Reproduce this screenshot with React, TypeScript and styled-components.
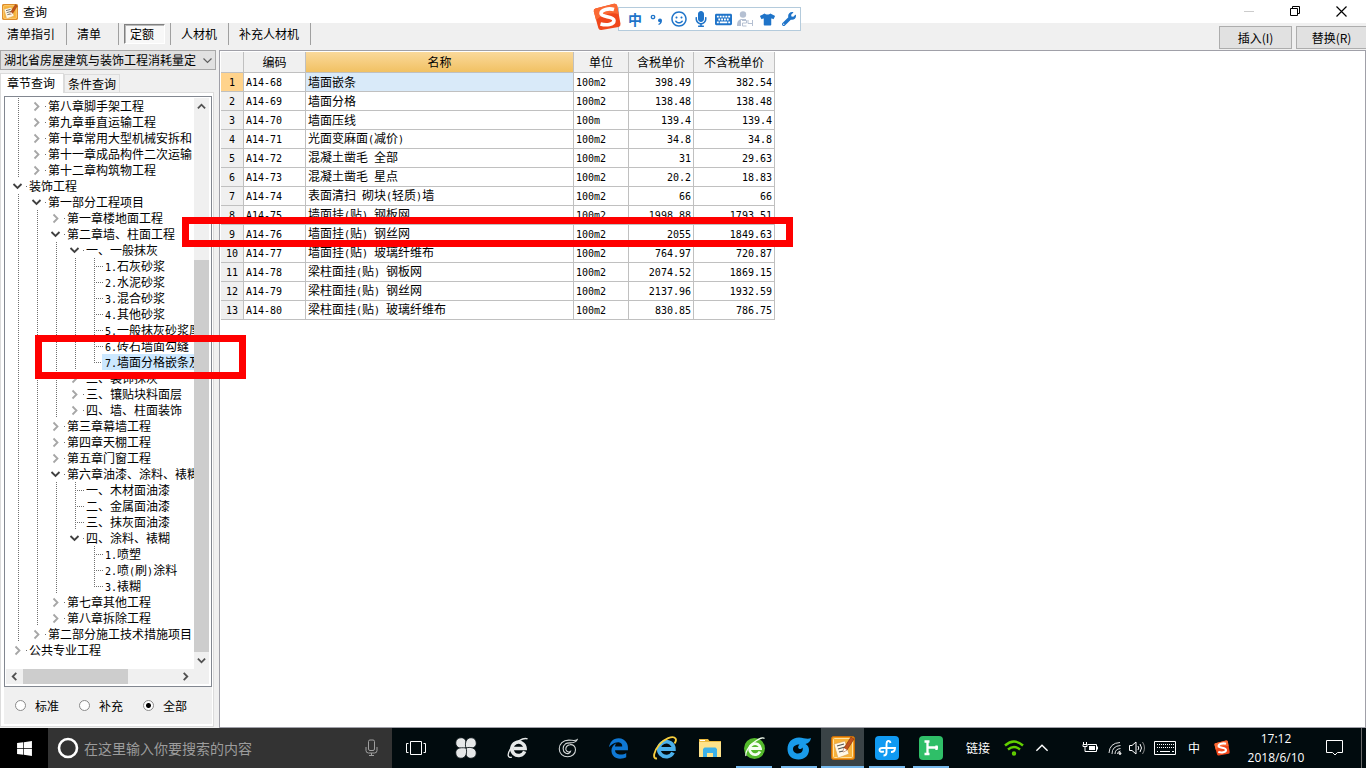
import React from "react";
import styled, { createGlobalStyle, css } from "styled-components";
import {
  FaKeyboard,
  FaMicrophone,
  FaRegSmile,
  FaTshirt,
  FaWindows,
  FaWrench,
} from "react-icons/fa";
import { FaEdgeLegacy } from "react-icons/fa6";

const GlobalStyle = createGlobalStyle`
  *, *::before, *::after { box-sizing: border-box; }
  body { margin: 0; background: #f0f0f0; }
  button, input, select, table { font: inherit; color: inherit; }
  button { border: 0; padding: 0; background: none; }
`;

const uiFont = `"Noto Sans CJK SC", sans-serif`;
const halfWidthFont = `"DejaVu Sans Mono", monospace`;

/* ---------- text ---------- */

const Half = styled.span`
  font-family: ${halfWidthFont};
  font-size: 10px;
  white-space: pre;
`;

/* Latin letters and digits take half of the width of a Chinese character. */
function Mixed({ text }: { text: string }) {
  const runs = text.match(/[\x20-\x7e]+|[^\x20-\x7e]+/g) ?? [];
  return (
    <>
      {runs.map((run, i) =>
        /^[\x20-\x7e]/.test(run) ? <Half key={i}>{run}</Half> : <React.Fragment key={i}>{run}</React.Fragment>
      )}
    </>
  );
}

/* ---------- window frame ---------- */

const Screen = styled.div`
  position: relative;
  display: flex;
  flex-direction: column;
  min-height: 100vh;
  overflow: hidden;
  background: #f0f0f0;
  color: #000;
  font-family: ${uiFont};
  font-size: 12px;
  line-height: 16px;
`;

const TitleBar = styled.header`
  display: flex;
  align-items: center;
  height: 23px;
  padding: 0 2px;
  background: #fff;
`;

const WindowTitle = styled.h1`
  flex: 1;
  margin: 0 0 0 5px;
  font-size: 12px;
  font-weight: 400;
`;

const WindowControl = styled.button<{ $faded?: boolean }>`
  display: grid;
  place-items: center;
  width: 46px;
  height: 20px;
  color: ${(p) => (p.$faded ? "#cccccc" : "#000")};
`;

const ToolBar = styled.div`
  display: flex;
  justify-content: space-between;
  height: 27px;
`;

const ToolNav = styled.nav`
  display: flex;
  height: 22px;
`;

const ToolButton = styled.button<{ $width: number; $inset?: number }>`
  width: ${(p) => p.$width}px;
  padding-left: ${(p) => p.$inset ?? 10}px;
  border-right: 1px solid #a0a0a0;
  text-align: left;
`;

const PressedSlot = styled.div`
  display: flex;
  width: 52px;
  padding: 1px 5px;
  border-right: 1px solid #a0a0a0;
`;

const PressedButton = styled.button`
  flex: 1;
  padding-left: 5px;
  border: 1px solid;
  border-color: #808080 #fff #fff #808080;
  box-shadow: inset 1px 1px 0 #b8b8b8;
  background: #f8f8f8;
  text-align: left;
`;

const Actions = styled.div`
  display: flex;
  align-items: flex-start;
  gap: 4px;
  padding-top: 3px;
`;

const ActionButton = styled.button<{ $edge?: boolean }>`
  width: ${(p) => (p.$edge ? 70 : 73)}px;
  height: 23px;
  border: 1px solid #adadad;
  ${(p) => p.$edge && "border-right: 0;"}
  background: #e1e1e1;
`;

const Body = styled.main`
  display: flex;
  flex: 1;
`;

/* ---------- left pane ---------- */

const Side = styled.aside`
  display: flex;
  flex: none;
  flex-direction: column;
  width: 219px;
  padding-bottom: 1px;
`;

const ComboBox = styled.div`
  position: relative;
  width: 216px;
  height: 20px;
  margin-bottom: 3px;
`;

const ComboSelect = styled.select`
  display: block;
  width: 100%;
  height: 100%;
  padding: 0 18px 0 3px;
  appearance: none;
  border: 1px solid #a8a8a8;
  border-radius: 0;
  background: #e1e1e1;
`;

const ComboArrow = styled.svg`
  position: absolute;
  top: 8px;
  right: 4px;
  pointer-events: none;
`;

const Tabs = styled.div`
  display: flex;
  align-items: flex-end;
  height: 19px;
`;

const Tab = styled.button<{ $active?: boolean }>`
  border: 1px solid #dcdcdc;
  border-bottom: 0;
  ${(p) =>
    p.$active
      ? css`
          position: relative;
          width: 64px;
          height: 20px;
          margin-bottom: -1px;
          padding: 0 2px 2px 0;
          background: #fff;
        `
      : css`
          width: 56px;
          height: 18px;
          background: #f0f0f0;
        `}
`;

const TabPanel = styled.div`
  display: flex;
  flex: 1;
  flex-direction: column;
  width: 214px;
  padding: 3px 1px 2px 3px;
  border: 1px solid #dcdcdc;
  background: #fff;
`;

const TreeBox = styled.div`
  display: grid;
  flex: 1;
  grid-template-columns: minmax(0, 1fr) 15px;
  grid-template-rows: 1fr 15px;
  padding: 1px 2px 2px 1px;
  border: 1px solid #828790;
`;

const TreeList = styled.ul`
  margin: 0;
  padding: 0 0 0 3px;
  overflow: hidden;
  list-style: none;
`;

const TreeRow = styled.li`
  display: flex;
  height: 16px;
  white-space: nowrap;
`;

const Guide = styled.span<{ $last?: boolean }>`
  display: block;
  flex: none;
  width: ${(p) => (p.$last ? 17 : 19)}px;
  height: 16px;
`;

const Expander = styled.button`
  display: block;
  flex: none;
  width: 17px;
  height: 16px;
`;

const CellDrawing = styled.svg`
  display: block;
  overflow: visible;
`;

const TreeLabel = styled.button<{ $selected?: boolean }>`
  flex: 1 0 auto;
  padding-left: 3px;
  background: ${(p) => (p.$selected ? "#cce8ff" : "transparent")};
  text-align: left;
`;

const ScrollBar = styled.div<{ $horizontal?: boolean }>`
  display: flex;
  flex-direction: ${(p) => (p.$horizontal ? "row" : "column")};
  background: #f0f0f0;
`;

const ScrollTrack = styled.div<{ $horizontal?: boolean }>`
  display: flex;
  flex: 1;
  flex-direction: ${(p) => (p.$horizontal ? "row" : "column")};
  justify-content: ${(p) => (p.$horizontal ? "flex-start" : "flex-end")};
`;

const ScrollThumb = styled.div<{ $share: number }>`
  flex: 0 0 ${(p) => p.$share}%;
  background: #cdcdcd;
`;

const ScrollButton = styled.button`
  display: grid;
  flex: 0 0 17px;
  place-items: center;
`;

const ScrollCorner = styled.div`
  background: #f0f0f0;
`;

const Filters = styled.div`
  display: flex;
  align-items: center;
  gap: 20px;
  height: 37px;
  padding-left: 11px;
  background: #f0f0f0;
`;

const RadioLabel = styled.label`
  display: flex;
  align-items: center;
  gap: 9px;
`;

const Radio = styled.input`
  width: 11px;
  height: 11px;
  margin: 0;
  appearance: none;
  border: 1px solid #8a8a8a;
  border-radius: 50%;
  background: #fff;
  &:checked {
    background: radial-gradient(circle, #000 0 2px, #fff 3px);
  }
`;

/* ---------- price table ---------- */

const GridPane = styled.section`
  flex: 1;
  padding: 1px;
  border: 1px solid #a0a0a8;
  background: #fff;
`;

const Grid = styled.table`
  width: 554px;
  table-layout: fixed;
  border-spacing: 0;
`;

const Col = styled.col<{ $width: number }>`
  width: ${(p) => p.$width}px;
`;

const cell = css`
  padding: 0 2px;
  overflow: hidden;
  border: solid #c0c0c0;
  border-width: 0 1px 1px 0;
  font-weight: 400;
  white-space: nowrap;
`;

const HeadCell = styled.th<{ $active?: boolean }>`
  ${cell}
  height: 21px;
  background: ${(p) => (p.$active ? "linear-gradient(#fad99b, #f1c163)" : "#f0f0f0")};
`;

const RowHead = styled.th<{ $active?: boolean }>`
  ${cell}
  height: 19px;
  background: ${(p) => (p.$active ? "#ffd38c" : "#f0f0f0")};
`;

const Cell = styled.td<{ $number?: boolean; $selected?: boolean }>`
  ${cell}
  height: 19px;
  background: ${(p) => (p.$selected ? "#d9eaf9" : "#fff")};
  text-align: ${(p) => (p.$number ? "right" : "left")};
`;

/* ---------- overlays ---------- */

const Marker = styled.div<{ $x: number; $y: number; $w: number; $h: number }>`
  position: absolute;
  top: ${(p) => p.$y}px;
  left: ${(p) => p.$x}px;
  width: ${(p) => p.$w}px;
  height: ${(p) => p.$h}px;
  border: 7px solid #ff0000;
  pointer-events: none;
`;

const ImeBar = styled.div`
  position: absolute;
  top: 7px;
  left: 618px;
  display: flex;
  align-items: center;
  width: 183px;
  height: 24px;
  padding-left: 5px;
  border: 1px solid #b4cbdc;
  background: #fff;
  color: #1f74c9;
`;

const ImeLogo = styled.svg`
  position: absolute;
  top: -5px;
  left: -26px;
`;

const ImeButton = styled.button<{ $faded?: boolean }>`
  display: grid;
  place-items: center;
  width: 22px;
  height: 22px;
  color: ${(p) => (p.$faded ? "#b5c0d2" : "#1f74c9")};
  font-size: 14px;
  font-weight: 700;
  line-height: 20px;
`;

/* ---------- taskbar ---------- */

const TaskBar = styled.footer`
  display: flex;
  height: 40px;
  background: #010b0e;
  color: #fff;
`;

const StartButton = styled.button`
  display: grid;
  flex: none;
  place-items: center;
  width: 48px;
  background: #000;
`;

const SearchBox = styled.div`
  display: flex;
  flex: none;
  align-items: center;
  gap: 5px;
  width: 344px;
  padding: 0 14px 0 8px;
  background: #333;
  color: #a0a0a0;
`;

const SearchInput = styled.input`
  flex: 1;
  min-width: 0;
  padding: 0;
  border: 0;
  outline: 0;
  background: none;
  font-size: 14px;
  &::placeholder {
    color: #9c9c9c;
    opacity: 1;
  }
`;

const TaskButton = styled.button<{ $width: number; $running?: boolean; $active?: boolean }>`
  display: grid;
  flex: none;
  place-items: center;
  width: ${(p) => p.$width}px;
  background: ${(p) =>
    p.$active
      ? "linear-gradient(#76b9ed, #76b9ed) bottom / 100% 2px no-repeat #3a4346"
      : p.$running
      ? "linear-gradient(#76b9ed, #76b9ed) bottom / 36px 2px no-repeat"
      : "none"};
`;

const Tray = styled.div`
  display: flex;
  margin-left: auto;
`;

const TrayButton = styled.button<{ $width: number; $before?: number }>`
  display: grid;
  flex: none;
  place-items: center;
  width: ${(p) => p.$width}px;
  margin-left: ${(p) => p.$before ?? 0}px;
`;

const Clock = styled.time`
  display: flex;
  flex-direction: column;
  justify-content: center;
  width: 62px;
  margin-left: 6px;
  font-family: "Open Sans", sans-serif;
  line-height: 19px;
  text-align: center;
`;

const ShowDesktop = styled.button`
  width: 5px;
  border-left: 1px solid #6a6a6a;
`;

/* ---------- drawings ---------- */

function NotebookIcon({ size }: { size: number }) {
  return (
    <svg width={size} height={size} viewBox="0 0 24 24" aria-hidden>
      <rect x="0.5" y="0.5" width="23" height="23" rx="2" fill="#f39a1c" stroke="#c86c08" />
      <rect x="2.5" y="2.5" width="19" height="19" rx="1" fill="#f7b23a" stroke="#ffe2a0" />
      <path d="M3 8 14 5l4 13-11 4z" fill="#fff8e6" stroke="#d89a40" strokeWidth=".6" />
      <path d="m6 10 7-2M7 13l7-2M8 16l4-1" stroke="#555" strokeWidth="1.2" />
      <path d="m12 16 1-4 7-11 3 2-7 11z" fill="#c2521c" stroke="#7c2c08" strokeWidth=".6" />
      <path d="m12 16 1-4 3 2z" fill="#fff" />
    </svg>
  );
}

function SogouMark() {
  return (
    <>
      <path d="M2.5 5.5 21 .8q2.6-.5 3.2 2l3.3 18q.3 2.5-2 3.2L8.500 27q-2.600.4-3.200-2L.8 8.500q-.5-2.400 1.700-3z" fill="#f0471b" />
      <path d="M2.5 5.5 21 .8q2.600-.5 3.200 2L25.500 11Q13 8 3 17L.8 8.500q-.5-2.400 1.700-3z" fill="#fb6a34" />
      <path d="M21 6.500C16 5 8 6.500 8 10.500s13 2.500 13 7-8 5-13.500 3.500" fill="none" stroke="#fff" strokeWidth="3.600" />
    </>
  );
}

function Chevron({ dir, size = 9, color = "#505050", width = 2 }: { dir: "up" | "down" | "left" | "right"; size?: number; color?: string; width?: number }) {
  const d = { up: "M1 7 5 3l4 4", down: "M1 3l4 4 4-4", left: "M7 1 3 5l4 4", right: "M3 1l4 4-4 4" }[dir];
  return (
    <svg width={size} height={size} viewBox="0 0 10 10" aria-hidden>
      <path d={d} fill="none" stroke={color} strokeWidth={width} />
    </svg>
  );
}

function SwirlE({ color }: { color: string }) {
  return (
    <g fill="none" stroke={color}>
      <path d="M18.500 15.500A7 7 0 1 1 19 12.500H7" strokeWidth="3.600" />
      <path d="M5 21.500C1 23-.5 19 4 12.500S17 .5 21.500 2.500" strokeWidth="1.400" />
    </g>
  );
}

function Pinwheel() {
  return (
    <svg width="22" height="22" viewBox="0 0 24 24" aria-hidden>
      {[0, 90, 180, 270].map((a) => (
        <path key={a} d="M12 12C8 13.500.8 12.500.8 6.500.8 3 3 .8 6.800.8c4.700 0 6.200 4 5.200 11.200z" fill="#e6e8e8" stroke="#010b0e" strokeWidth=".9" transform={`rotate(${a} 12 12)`} />
      ))}
    </svg>
  );
}

function Folder() {
  return (
    <svg width="22" height="20" viewBox="0 0 22 20" aria-hidden>
      <path d="M0 1h9l1.500 2H22v16H0z" fill="#e9b93f" />
      <path d="M0 4h22v15H0z" fill="#fde28a" />
      <path d="M1 2h5v1H1z" fill="#fff" />
      <path d="M4 19v-8l1.500-1.500h11L18 11v8h-4v-4H8v4z" fill="#3bb0e8" />
    </svg>
  );
}

/* ---------- data ---------- */

type Kind = "open" | "closed" | "leaf";
type TreeItem = { level: number; kind: Kind; label: string };

const item = (level: number, kind: Kind, label: string): TreeItem => ({ level, kind, label });

const tree: TreeItem[] = [
  item(1, "closed", "第八章脚手架工程"),
  item(1, "closed", "第九章垂直运输工程"),
  item(1, "closed", "第十章常用大型机械安拆和"),
  item(1, "closed", "第十一章成品构件二次运输"),
  item(1, "closed", "第十二章构筑物工程"),
  item(0, "open", "装饰工程"),
  item(1, "open", "第一部分工程项目"),
  item(2, "closed", "第一章楼地面工程"),
  item(2, "open", "第二章墙、柱面工程"),
  item(3, "open", "一、一般抹灰"),
  item(4, "leaf", "1.石灰砂浆"),
  item(4, "leaf", "2.水泥砂浆"),
  item(4, "leaf", "3.混合砂浆"),
  item(4, "leaf", "4.其他砂浆"),
  item(4, "leaf", "5.一般抹灰砂浆厚"),
  item(4, "leaf", "6.砖石墙面勾缝"),
  item(4, "leaf", "7.墙面分格嵌条及"),
  item(3, "closed", "二、装饰抹灰"),
  item(3, "closed", "三、镶贴块料面层"),
  item(3, "closed", "四、墙、柱面装饰"),
  item(2, "closed", "第三章幕墙工程"),
  item(2, "closed", "第四章天棚工程"),
  item(2, "closed", "第五章门窗工程"),
  item(2, "open", "第六章油漆、涂料、裱糊"),
  item(3, "leaf", "一、木材面油漆"),
  item(3, "leaf", "二、金属面油漆"),
  item(3, "leaf", "三、抹灰面油漆"),
  item(3, "open", "四、涂料、裱糊"),
  item(4, "leaf", "1.喷塑"),
  item(4, "leaf", "2.喷(刷)涂料"),
  item(4, "leaf", "3.裱糊"),
  item(2, "closed", "第七章其他工程"),
  item(2, "closed", "第八章拆除工程"),
  item(1, "closed", "第二部分施工技术措施项目"),
  item(0, "closed", "公共专业工程"),
];
const selectedLabel = "7.墙面分格嵌条及";

/* True when a later row continues the branch at this level. */
function branchContinues(index: number, level: number) {
  for (let i = index + 1; i < tree.length; i++) {
    if (tree[i].level < level) return false;
    if (tree[i].level === level) return true;
  }
  return false;
}

const rows = [
  ["A14-68", "墙面嵌条", "100m2", "398.49", "382.54"],
  ["A14-69", "墙面分格", "100m2", "138.48", "138.48"],
  ["A14-70", "墙面压线", "100m", "139.4", "139.4"],
  ["A14-71", "光面变麻面(减价)", "100m2", "34.8", "34.8"],
  ["A14-72", "混凝土凿毛 全部", "100m2", "31", "29.63"],
  ["A14-73", "混凝土凿毛 星点", "100m2", "20.2", "18.83"],
  ["A14-74", "表面清扫 砌块(轻质)墙", "100m2", "66", "66"],
  ["A14-75", "墙面挂(贴) 钢板网", "100m2", "1998.88", "1793.51"],
  ["A14-76", "墙面挂(贴) 钢丝网", "100m2", "2055", "1849.63"],
  ["A14-77", "墙面挂(贴) 玻璃纤维布", "100m2", "764.97", "720.87"],
  ["A14-78", "梁柱面挂(贴) 钢板网", "100m2", "2074.52", "1869.15"],
  ["A14-79", "梁柱面挂(贴) 钢丝网", "100m2", "2137.96", "1932.59"],
  ["A14-80", "梁柱面挂(贴) 玻璃纤维布", "100m2", "830.85", "786.75"],
];

/* ---------- parts ---------- */

const dotted = { stroke: "#707070", strokeDasharray: "1 1", shapeRendering: "crispEdges" as const };

function TreeRowView({ index }: { index: number }) {
  const { level, kind, label } = tree[index];
  const continues = branchContinues(index, level);
  return (
    <TreeRow>
      {Array.from({ length: level }, (_, k) => (
        <Guide key={k}>
          {branchContinues(index, k) && (
            <CellDrawing width="19" height="16" aria-hidden>
              <path d="M9.5 0V16" {...dotted} />
            </CellDrawing>
          )}
        </Guide>
      ))}
      {kind === "leaf" ? (
        <Guide $last>
          <CellDrawing width="17" height="16" aria-hidden>
            <path d={continues ? "M9.5 0V16" : "M9.5 0V9"} {...dotted} />
            <path d="M11 8.5H18" {...dotted} />
          </CellDrawing>
        </Guide>
      ) : (
        <Expander aria-label={`${kind === "open" ? "折叠" : "展开"} ${label}`}>
          <CellDrawing width="17" height="16" aria-hidden>
            {kind === "open" ? (
              <path d="M4.500 6 8.500 10l4-4" fill="none" stroke="#404040" strokeWidth="1.800" />
            ) : (
              <path d="M6.500 4.500 10.500 8.500l-4 4" fill="none" stroke="#a6a6a6" strokeWidth="1.800" />
            )}
            <path d="M17 8.500h1" stroke="#707070" shapeRendering="crispEdges" />
          </CellDrawing>
        </Expander>
      )}
      <TreeLabel $selected={label === selectedLabel}>
        <Mixed text={label} />
      </TreeLabel>
    </TreeRow>
  );
}

function PriceTable() {
  return (
    <Grid>
      <colgroup>
        {[23, 62, 268, 55, 65, 81].map((w, i) => (
          <Col key={i} $width={w} />
        ))}
      </colgroup>
      <thead>
        <tr>
          <HeadCell />
          <HeadCell scope="col">编码</HeadCell>
          <HeadCell scope="col" $active>
            名称
          </HeadCell>
          <HeadCell scope="col">单位</HeadCell>
          <HeadCell scope="col">含税单价</HeadCell>
          <HeadCell scope="col">不含税单价</HeadCell>
        </tr>
      </thead>
      <tbody>
        {rows.map((row, r) => (
          <tr key={row[0]}>
            <RowHead scope="row" $active={r === 0}>
              <Mixed text={String(r + 1)} />
            </RowHead>
            {row.map((value, c) => (
              <Cell key={c} $number={c > 2} $selected={r === 0 && c === 1}>
                <Mixed text={value} />
              </Cell>
            ))}
          </tr>
        ))}
      </tbody>
    </Grid>
  );
}

function InputMethodBar() {
  return (
    <ImeBar>
      <ImeLogo width="30" height="30" viewBox="0 0 30 30" aria-hidden>
        <SogouMark />
      </ImeLogo>
      <ImeButton>中</ImeButton>
      <ImeButton aria-label="标点">
        <svg width="14" height="14" viewBox="0 0 14 14" aria-hidden>
          <circle cx="3" cy="5" r="1.700" fill="none" stroke="currentColor" strokeWidth="1.300" />
          <path d="M8 8.500a2 2 0 1 1 4 0c0 2.500-1.500 4-3.500 4.500v-1.300c1-.3 1.500-1 1.500-1.500-1.200 0-2-.7-2-1.700z" fill="currentColor" />
        </svg>
      </ImeButton>
      <ImeButton aria-label="表情"><FaRegSmile size={16} /></ImeButton>
      <ImeButton aria-label="语音"><FaMicrophone size={16} /></ImeButton>
      <ImeButton aria-label="软键盘"><FaKeyboard size={17} /></ImeButton>
      <ImeButton aria-label="登录" $faded>
        <svg width="18" height="16" viewBox="0 0 18 16" aria-hidden>
          <circle cx="7" cy="3.500" r="3.200" fill="currentColor" />
          <path d="M1 15c0-5 2-7 5-7h4v1H5v6z" fill="currentColor" />
          <path d="M6 9.500h4.500v2.500H6.500v3h4M12 9v3.500h4.500V15M16.500 9v6" fill="none" stroke="currentColor" />
        </svg>
      </ImeButton>
      <ImeButton aria-label="皮肤"><FaTshirt size={15} /></ImeButton>
      <ImeButton aria-label="工具箱"><FaWrench size={14} /></ImeButton>
    </ImeBar>
  );
}

function WindowsTaskBar() {
  return (
    <TaskBar>
      <StartButton aria-label="开始"><FaWindows size={17} /></StartButton>
      <SearchBox>
        <svg width="23" height="24" viewBox="0 0 23 24" aria-hidden>
          <circle cx="12" cy="12" r="9" fill="none" stroke="#fff" strokeWidth="2.600" />
        </svg>
        <SearchInput aria-label="搜索" placeholder="在这里输入你要搜索的内容" />
        <svg width="13" height="18" viewBox="0 0 13 18" fill="none" stroke="#a0a0a0" aria-hidden>
          <rect x="3.500" y="1" width="6" height="10.500" rx="1.500" />
          <path d="M1 8v3.500q0 2.500 2.500 2.500h6q2.500 0 2.500-2.500V8M6.500 14v3M4 16.500h5" />
        </svg>
      </SearchBox>
      <TaskButton $width={48} aria-label="任务视图">
        <svg width="22" height="16" viewBox="0 0 22 16" fill="none" stroke="#fff" aria-hidden>
          <path d="M5.500 1.500h11v13h-11zM3.500 3.500h-2v9h2M18.500 3.500h2v9h-2" />
        </svg>
      </TaskButton>
      <TaskButton $width={52} aria-label="风车应用"><Pinwheel /></TaskButton>
      <TaskButton $width={51} aria-label="浏览器">
        <svg width="22" height="24" viewBox="0 0 23 24" aria-hidden><SwirlE color="#e6e8e8" /></svg>
      </TaskButton>
      <TaskButton $width={50} aria-label="加速器">
        <svg width="20" height="20" viewBox="0 0 24 24" fill="none" stroke="#d4d8d8" strokeWidth="1.300" aria-hidden>
          <path d="M23 2c-3 2-6 .5-10 .5C6 2.500 1.500 7 1.500 13S6 22.500 11.500 22.500 21 19 21 14c0-4-3-6.500-6.500-6-3.500.3-5.500 3-5 6 .5 2.500 3.500 3.500 5.500 2-.5 2.500-3.500 3.500-6 2-4-2.500-3.500-8.500 0-11C13 4.500 21 8 23 2z" />
        </svg>
      </TaskButton>
      <TaskButton $width={50} aria-label="Edge"><FaEdgeLegacy size={21} color="#0f78d4" /></TaskButton>
      <TaskButton $width={44} aria-label="Internet Explorer">
        <svg width="24" height="24" viewBox="0 0 24 24" aria-hidden>
          <path d="M20 16.500A7.500 7.500 0 1 1 20.800 13H7" fill="none" stroke="#4bb0ea" strokeWidth="3.800" />
          <path d="M4 22.500C-1 23 1 15 6 9S20-1 22.500 2.500c1 1.500-.3 4-1 5" fill="none" stroke="#f7cf3f" strokeWidth="1.900" />
        </svg>
      </TaskButton>
      <TaskButton $width={45} aria-label="文件资源管理器"><Folder /></TaskButton>
      <TaskButton $width={44} $running aria-label="安全浏览器">
        <svg width="23" height="24" viewBox="0 0 23 24" aria-hidden>
          <circle cx="11.500" cy="12.500" r="10.500" fill="#54b92c" />
          <g fill="none" stroke="#f4fff0">
            <path d="M17 15.500A5.500 5.500 0 1 1 17.500 12.500H7" strokeWidth="2.800" />
            <path d="M3 20C2 17 5 11 10 7s10-6 11.500-4.500" strokeWidth="1.200" />
          </g>
        </svg>
      </TaskButton>
      <TaskButton $width={45} $running aria-label="广联达">
        <svg width="24" height="24" viewBox="0 0 24 24" aria-hidden>
          <path d="M24 2c-4 2-7-.5-12-.5C5 1.500.5 6.500.5 13S5 23.500 11.500 23.500 22 19 22 14c0-3-1.500-5-3.500-6C21.500 7.500 23.500 5 24 2zM12.500 8.500c-2 2-1.500 4 0 4.500 1.500.4 2.500-.5 3-1.500 1 3-1 6-4.500 6s-5-2.500-5-4.500c0-3 3-4.500 6.500-4.500z" fill="#199bea" fillRule="evenodd" />
        </svg>
      </TaskButton>
      <TaskButton $width={43} $active aria-label="查询"><NotebookIcon size={24} /></TaskButton>
      <TaskButton $width={45} $running aria-label="云计价">
        <svg width="24" height="24" viewBox="0 0 24 24" aria-hidden>
          <rect width="24" height="24" rx="4" fill="#109af2" />
          <path d="M15.500 7q-.5-2.500-2.500-2-1.500.5-1.500 3v8.500q0 3-3 3M9 15.500q-4.500 1-4.500-1.500 0-2 3-2H20q0 4-4 4" fill="none" stroke="#fff" strokeWidth="1.900" />
        </svg>
      </TaskButton>
      <TaskButton $width={44} $running aria-label="钢筋算量">
        <svg width="24" height="24" viewBox="0 0 24 24" aria-hidden>
          <rect width="24" height="24" rx="4" fill="#2fbf68" />
          <path d="M5.500 5.500h5M5.500 18h5M8.500 5v13M8.500 11.500H19M17.500 9.500v4.500" fill="none" stroke="#fff" strokeWidth="2.300" />
        </svg>
      </TaskButton>
      <Tray>
        <TrayButton $width={30}>链接</TrayButton>
        <TrayButton $width={42} aria-label="无线网络">
          <svg width="20" height="18" viewBox="0 0 20 18" fill="none" stroke="#62d000" strokeWidth="2.400" aria-hidden>
            <path d="M1 6.500q9-8 18 0M4 10.500q6-5 12 0" />
            <circle cx="10" cy="14.500" r="1" />
          </svg>
        </TrayButton>
        <TrayButton $width={14} aria-label="显示隐藏的图标"><Chevron dir="up" size={14} color="#fff" width={1} /></TrayButton>
        <TrayButton $width={26} $before={28} aria-label="电池">
          <svg width="16" height="14" viewBox="0 0 16 14" fill="none" stroke="#fff" aria-hidden>
            <path d="M5.500 3.500h9v7h-9M1.500 1v2M4.500 1v2M1 3.500h4v2H1zM3 6v4.500h3" />
            <path d="M7 5h6v4H7z" fill="#fff" stroke="none" />
            <path d="M15.500 5.500v3" />
          </svg>
        </TrayButton>
        <TrayButton $width={24} aria-label="网络">
          <svg width="14" height="14" viewBox="0 0 14 14" fill="none" stroke="#e0e0e0" aria-hidden>
            <path d="M1 12Q1.500 2 12 1.500M4 13Q4 5 12.500 4.500M7 13q0-5 5.500-5.500M9.500 13q0-2.500 3-3" />
            <circle cx="12" cy="12.500" r="1" fill="#fff" />
          </svg>
        </TrayButton>
        <TrayButton $width={20} aria-label="音量">
          <svg width="17" height="14" viewBox="0 0 17 14" fill="none" stroke="#fff" aria-hidden>
            <path d="M.5 4.500H3l4-3.500v12L3 9.500H.5zM9 5q1.500 2 0 4M11 3q3 4 0 8" />
            <path d="M13.500 1q4 6 0 12" stroke="#888" />
          </svg>
        </TrayButton>
        <TrayButton $width={36} aria-label="触摸键盘">
          <svg width="24" height="14" viewBox="0 0 24 14" fill="none" stroke="#fff" aria-hidden>
            <path d="M1.500.5h21v13h-21z" />
            <path d="M4 3.500h17M4 6.500h17" strokeDasharray="1 1" />
            <path d="M4 10.500h1M7 10.500h10M19 10.500h2" />
          </svg>
        </TrayButton>
        <TrayButton $width={22}>中</TrayButton>
        <TrayButton $width={34} aria-label="搜狗输入法">
          <svg width="16" height="16" viewBox="0 0 28 28" aria-hidden><SogouMark /></svg>
        </TrayButton>
        <Clock>
          <span>17:12</span>
          <span>2018/6/10</span>
        </Clock>
        <TrayButton $width={54} aria-label="通知">
          <svg width="17" height="16" viewBox="0 0 17 16" fill="none" stroke="#fff" aria-hidden>
            <path d="M.5.5h16v12h-5l-2.500 2.500L6.500 12.500h-6z" />
          </svg>
        </TrayButton>
        <ShowDesktop aria-label="显示桌面" />
      </Tray>
    </TaskBar>
  );
}

export default function App() {
  return (
    <Screen>
      <GlobalStyle />
      <TitleBar>
        <NotebookIcon size={16} />
        <WindowTitle>查询</WindowTitle>
        <WindowControl $faded aria-label="最小化">
          <svg width="10" height="10" aria-hidden><path d="M0 4.500h10" stroke="currentColor" /></svg>
        </WindowControl>
        <WindowControl aria-label="还原">
          <svg width="11" height="11" fill="none" stroke="currentColor" aria-hidden>
            <path d="M.5 2.500h7v7h-7zM2.500 2.500v-2h7v7h-2" />
          </svg>
        </WindowControl>
        <WindowControl aria-label="关闭">
          <svg width="11" height="11" stroke="currentColor" strokeWidth="1.200" aria-hidden>
            <path d="M.5.5l10 10M10.500.5l-10 10" />
          </svg>
        </WindowControl>
      </TitleBar>

      <ToolBar>
        <ToolNav>
          <ToolButton $width={67} $inset={7}>清单指引</ToolButton>
          <ToolButton $width={52}>清单</ToolButton>
          <PressedSlot>
            <PressedButton aria-pressed="true">定额</PressedButton>
          </PressedSlot>
          <ToolButton $width={58}>人材机</ToolButton>
          <ToolButton $width={82}>补充人材机</ToolButton>
        </ToolNav>
        <Actions>
          <ActionButton>插入(I)</ActionButton>
          <ActionButton $edge>替换(R)</ActionButton>
        </Actions>
      </ToolBar>

      <Body>
        <Side>
          <ComboBox>
            <ComboSelect aria-label="定额库">
              <option>湖北省房屋建筑与装饰工程消耗量定</option>
            </ComboSelect>
            <ComboArrow width="9" height="6" aria-hidden>
              <path d="M.5.5l4 4 4-4" fill="none" stroke="#606060" strokeWidth="1.200" />
            </ComboArrow>
          </ComboBox>
          <Tabs role="tablist">
            <Tab role="tab" aria-selected="true" $active>章节查询</Tab>
            <Tab role="tab" aria-selected="false">条件查询</Tab>
          </Tabs>
          <TabPanel role="tabpanel">
            <TreeBox>
              <TreeList>
                {tree.map((_, i) => (
                  <TreeRowView key={i} index={i} />
                ))}
              </TreeList>
              <ScrollBar>
                <ScrollButton aria-label="向上滚动"><Chevron dir="up" /></ScrollButton>
                <ScrollTrack><ScrollThumb $share={73} /></ScrollTrack>
                <ScrollButton aria-label="向下滚动"><Chevron dir="down" /></ScrollButton>
              </ScrollBar>
              <ScrollBar $horizontal>
                <ScrollButton aria-label="向左滚动"><Chevron dir="left" /></ScrollButton>
                <ScrollTrack $horizontal><ScrollThumb $share={68} /></ScrollTrack>
                <ScrollButton aria-label="向右滚动"><Chevron dir="right" /></ScrollButton>
              </ScrollBar>
              <ScrollCorner />
            </TreeBox>
            <Filters role="radiogroup" aria-label="范围">
              <RadioLabel><Radio type="radio" name="scope" />标准</RadioLabel>
              <RadioLabel><Radio type="radio" name="scope" />补充</RadioLabel>
              <RadioLabel><Radio type="radio" name="scope" defaultChecked />全部</RadioLabel>
            </Filters>
          </TabPanel>
        </Side>
        <GridPane>
          <PriceTable />
        </GridPane>
      </Body>

      <WindowsTaskBar />

      <InputMethodBar />
      <Marker $x={182} $y={217} $w={611} $h={30} />
      <Marker $x={35} $y={335} $w={211} $h={44} />
    </Screen>
  );
}
